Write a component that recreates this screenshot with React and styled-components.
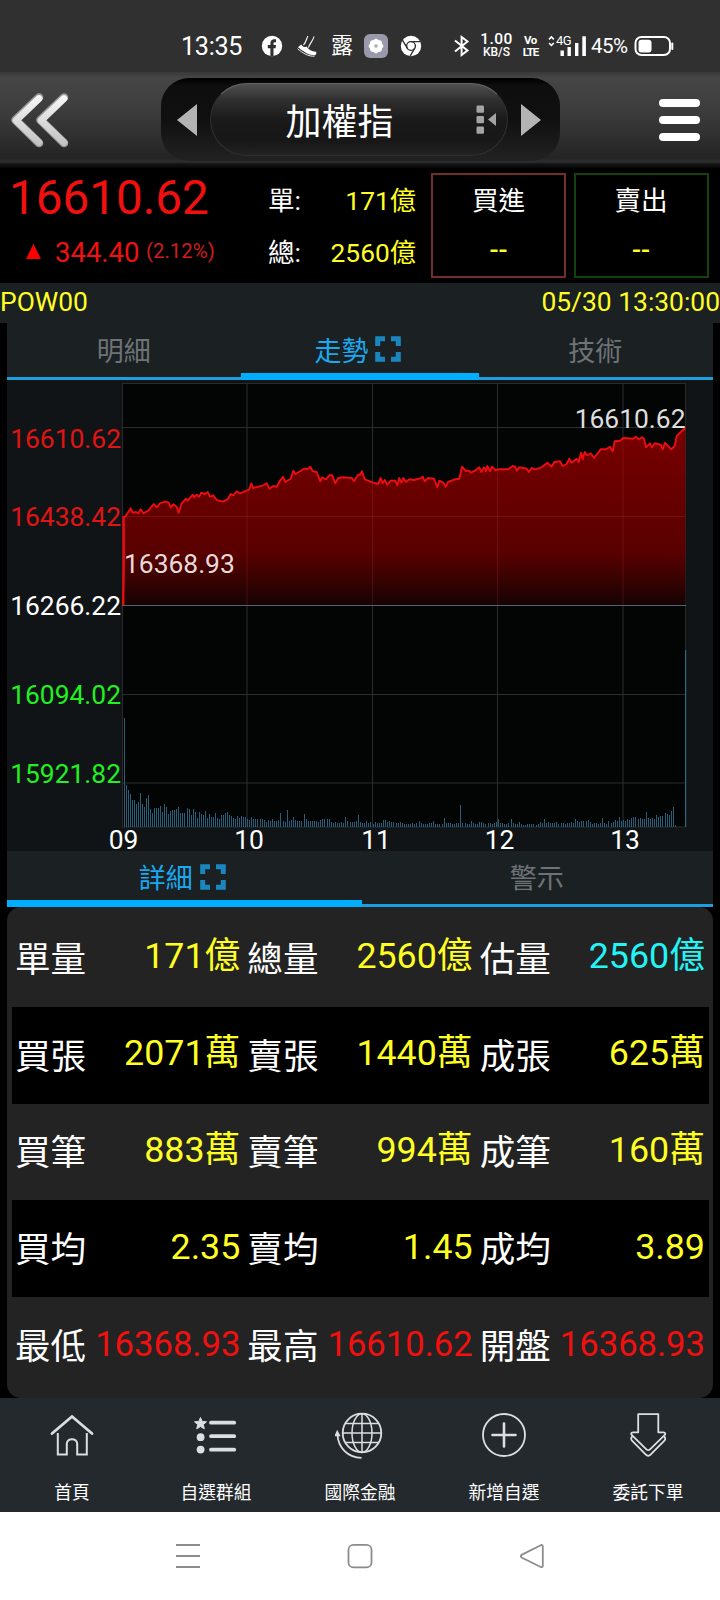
import React from "react";
import styled, { createGlobalStyle } from "styled-components";

const Colors = {
  Red: "#f01010",
  Yellow: "#ffff22",
  Green: "#22f022",
  Cyan: "#22f4f8",
  Blue: "#00aeff",
  Line: "#1c9fdc",
  Muted: "#6e7476",
  Bar: "#1b2023",
  Panel: "#232323",
};

const columns = [
  [
    { label: "單量", value: "171億" },
    { label: "總量", value: "2560億" },
    { label: "估量", value: "2560億", color: Colors.Cyan },
  ],
  [
    { label: "買張", value: "2071萬" },
    { label: "賣張", value: "1440萬" },
    { label: "成張", value: "625萬" },
  ],
  [
    { label: "買筆", value: "883萬" },
    { label: "賣筆", value: "994萬" },
    { label: "成筆", value: "160萬" },
  ],
  [
    { label: "買均", value: "2.35" },
    { label: "賣均", value: "1.45" },
    { label: "成均", value: "3.89" },
  ],
  [
    { label: "最低", value: "16368.93", color: Colors.Red },
    { label: "最高", value: "16610.62", color: Colors.Red },
    { label: "開盤", value: "16368.93", color: Colors.Red },
  ],
];

// chart data, x and y in thirds of a pixel
const trendMorning = [
  [369, 705], [372, 560], [371, 445], [377, 438], [392, 415], [398, 428],
  [408, 426], [415, 430], [422, 418], [430, 430], [445, 422], [461, 402],
  [470, 412], [480, 400], [495, 395], [506, 398], [512, 412], [520, 403],
  [530, 410], [536, 428], [545, 400], [558, 386], [563, 392], [578, 374],
  [583, 382], [590, 374], [597, 380], [604, 368], [614, 372], [623, 366],
  [630, 380], [640, 376], [650, 390], [668, 395], [683, 388], [692, 372],
  [700, 376], [710, 364], [720, 370], [740, 362], [748, 358], [754, 340],
  [760, 354], [775, 350], [790, 346], [800, 340], [808, 356], [820, 348],
  [830, 350], [840, 332], [849, 320], [856, 336], [872, 326], [880, 302],
  [886, 312], [900, 304], [912, 296], [925, 296], [931, 290], [938, 304],
  [950, 306], [961, 334], [966, 322], [978, 328], [988, 316], [997, 316],
  [1006, 340], [1015, 324], [1030, 322], [1056, 324], [1062, 334],
  [1074, 314],
];

const trendNoon = [
  [0, 314], [6, 304], [14, 328], [40, 338], [54, 342], [62, 324], [68, 340],
  [74, 330], [82, 344], [92, 332], [106, 332], [112, 346], [118, 324],
  [124, 338], [130, 324], [138, 336], [148, 328], [162, 330], [178, 326],
  [188, 320], [194, 334], [204, 324], [222, 326], [232, 352], [238, 332],
  [250, 338], [257, 350], [264, 336], [285, 328], [298, 326], [306, 290],
  [316, 302], [328, 302], [332, 308], [345, 302], [358, 292], [364, 306],
  [372, 292], [378, 304], [382, 288], [390, 304], [396, 290], [406, 300],
  [420, 298], [445, 298], [458, 288], [466, 290], [470, 302], [478, 292],
  [500, 296], [507, 306], [515, 294], [525, 298], [545, 292], [562, 278],
  [575, 290], [583, 276], [600, 274], [608, 288], [620, 282], [628, 266],
  [634, 278], [650, 266], [656, 276], [663, 248], [668, 268], [674, 246],
  [682, 256], [692, 250], [702, 264], [722, 238], [738, 238], [750, 230],
  [758, 244], [764, 214], [780, 212], [790, 204], [820, 206], [828, 200],
  [836, 208], [846, 202], [852, 206], [858, 232], [870, 220], [876, 232],
  [884, 220], [902, 224], [908, 238], [915, 218], [934, 238], [944, 228],
  [950, 198], [976, 173],
];

const volumes = [
  {
    from: 117,
    to: 240,
    bars: [
      109, 42, 37, 33, 27, 27, 23, 25, 34, 23, 20, 29, 32, 18, 14, 19, 19, 19,
      21, 15, 23, 20, 13, 16, 17, 17, 18, 20, 14, 14, 14, 19, 18, 12, 18, 15,
      9, 15, 13, 12, 16, 9, 13, 10, 10, 14, 9, 8, 12, 12, 14, 15, 12, 11, 9, 8,
      11, 9, 11, 10, 10,
    ],
  },
  {
    from: 240,
    to: 353,
    bars: [
      8, 7, 10, 8, 8, 8, 8, 8, 7, 5, 7, 6, 8, 6, 6, 7, 14, 6, 5, 17, 6, 7, 10,
      7, 6, 6, 6, 13, 8, 6, 6, 6, 6, 6, 5, 7, 8, 8, 8, 8, 5, 4, 5, 4, 4, 5, 4,
      10, 6, 5, 5, 5, 6, 12,
    ],
  },
  {
    from: 353,
    to: 491,
    bars: [
      5, 4, 4, 6, 4, 5, 3, 5, 4, 4, 4, 7, 7, 5, 6, 5, 5, 4, 4, 5, 4, 3, 3, 3,
      3, 4, 3, 4, 6, 4, 3, 3, 3, 4, 4, 6, 3, 3, 3, 3, 9, 4, 4, 4, 3, 3, 4, 4,
      22, 4, 4, 3, 3, 6, 4, 3, 3, 5, 5, 4, 3, 4, 4, 3, 4, 5,
    ],
  },
  {
    from: 491,
    to: 616,
    bars: [
      8, 4, 4, 3, 3, 4, 8, 4, 3, 3, 5, 3, 2, 2, 3, 3, 3, 3, 2, 3, 5, 4, 8, 4,
      5, 4, 4, 4, 5, 3, 4, 4, 3, 4, 4, 5, 4, 8, 6, 5, 6, 6, 6, 7, 5, 3, 4, 4,
      3, 4, 9, 4, 3, 6, 4, 5, 7, 6, 10, 6,
    ],
  },
  {
    from: 616,
    to: 670,
    bars: [
      7, 6, 8, 7, 9, 10, 10, 8, 9, 8, 8, 15, 9, 8, 9, 8, 12, 10, 11, 11, 14,
      13, 12, 16, 20, 2,
    ],
  },
];

const axis = [
  { text: "16610.62", y: 67.5, color: "#e01414" },
  { text: "16438.42", y: 146, color: "#e01414" },
  { text: "16266.22", y: 235, color: "#fff" },
  { text: "16094.02", y: 323.5, color: Colors.Green },
  { text: "15921.82", y: 402.7, color: Colors.Green },
];

const hours = [
  { text: "09", x: 116.5 },
  { text: "10", x: 242 },
  { text: "11", x: 369 },
  { text: "12", x: 492.5 },
  { text: "13", x: 618 },
];

const TrendChart = () => {
  // the svg starts at (7, 380) of the page
  const points = [
    ...trendMorning.map(([x, y]) => [x / 3 - 7, y / 3 - 10]),
    ...trendNoon.map(([x, y]) => [x / 3 + 353, y / 3 - 10]),
  ]
    .map(([x, y]) => `${x.toFixed(1)},${y.toFixed(1)}`)
    .join(" ");

  return (
    <Chart.Svg width="706" height="471" viewBox="0 0 706 471">
      <defs>
        <linearGradient id="fall" x1="0" y1="47" x2="0" y2="225" gradientUnits="userSpaceOnUse">
          <stop offset="0" stopColor="#780000" />
          <stop offset="0.7" stopColor="#5a0000" />
          <stop offset="0.85" stopColor="#3a0202" />
          <stop offset="1" stopColor="#160304" />
        </linearGradient>
      </defs>
      <rect x="115.5" y="3.5" width="563" height="443.5" fill="#030504" stroke="#272b2c" />
      <g stroke="#2a2d2e">
        <path d="M115 47.5H679M115 136.5H679M115 314.5H679M115 403H679" />
        <path d="M240 3V447M365.5 3V447M490.5 3V447M616 3V447" />
      </g>
      <polygon points={`${points} 678.5,225 116,225`} fill="url(#fall)" />
      <g stroke="#ff6060" strokeOpacity="0.14">
        <path d="M115 136.5H679M240 112V225M365.5 103V225M490.5 90V225M616 60V225" />
      </g>
      <polyline points={points} fill="none" stroke="#ee0c10" strokeWidth="1.9" strokeLinejoin="round" />
      <path d="M116.4 136V225" stroke="#e80c10" strokeWidth="2" />
      <path d="M115 225.5H679" stroke="#55636f" />
      {volumes.map(({ from, to, bars }) =>
        bars.map((h, i) => (
          <rect
            key={`${from}-${i}`}
            x={Math.round(from + ((to - from) / bars.length) * i)}
            y={447 - h}
            width="1"
            height={h}
            fill="#2a5f7c"
          />
        ))
      )}
      <rect x="678" y="270" width="1.2" height="177" fill="#2d6483" />
      {axis.map((item) => (
        <Chart.Text key={item.text} x="114" y={item.y} fill={item.color} textAnchor="end">
          {item.text}
        </Chart.Text>
      ))}
      <Chart.Text x="117" y="192.5" fill="#e8dada">
        16368.93
      </Chart.Text>
      <Chart.Text x="678.5" y="48" fill="#dedede" textAnchor="end">
        16610.62
      </Chart.Text>
      {hours.map((item) => (
        <Chart.Text key={item.text} x={item.x} y="469" fill="#fff" textAnchor="middle">
          {item.text}
        </Chart.Text>
      ))}
    </Chart.Svg>
  );
};

const ExpandIcon = () => (
  <svg width="26" height="26" viewBox="0 0 26 26" fill="none" stroke="#1a86bf" strokeWidth="5">
    <path d="M10 2.7H2.7V10M16 2.7H23.3V10M10 23.3H2.7V16M16 23.3H23.3V16" />
  </svg>
);

const StatusBar = () => (
  <Status.Wrap>
    <Status.Time>13:35</Status.Time>
    <Status.Item $left={19} $width={22}>
      <svg width="22" height="22" viewBox="0 0 22 22">
        <circle cx="11" cy="11" r="10.2" fill="#fff" />
        <path d="M9.4 21V13.2H6.8V10H9.4V8.2C9.4 5.5 11 4.3 13.2 4.3H15V7.2H13.9C12.8 7.2 12.5 7.7 12.5 8.6V10H15L14.6 13.2H12.5V21Z" fill="#303030" />
      </svg>
    </Status.Item>
    <Status.Item $left={14} $width={21}>
      <svg width="21" height="22" viewBox="0 0 21 22">
        <path d="M1 12.2L4.2 9.4C5.5 11.6 7 12.6 9.4 11.4C11.2 14 14 16.2 19 16.8C19.8 18.6 19 19.8 17.8 20.2C12 20.4 7 16.8 1 12.2Z" fill="#fff" />
        <path d="M0.6 13.8C6 18.3 11.5 21.6 17.5 21.2" fill="none" stroke="#fff" strokeWidth="0.9" />
        <path d="M10.8 1C9.5 4 8.8 7.8 6.5 10M17 1.5C16 6 13 8 11.4 12.6" fill="none" stroke="#fff" strokeWidth="1.1" />
      </svg>
    </Status.Item>
    <Status.Item $left={13} $width={22}>
      <Status.Lu>露</Status.Lu>
    </Status.Item>
    <Status.Item $left={11} $width={24}>
      <svg width="24" height="24" viewBox="0 0 24 24">
        <rect width="24" height="24" rx="6" fill="#9a99ab" />
        <g fill="#fff">
          <rect x="6.2" y="6.2" width="11.6" height="11.6" rx="2" />
          <rect x="6.2" y="6.2" width="11.6" height="11.6" rx="2" transform="rotate(45 12 12)" />
        </g>
        <circle cx="12" cy="12" r="1.8" fill="#aaa9b5" />
      </svg>
    </Status.Item>
    <Status.Item $left={12} $width={22}>
      <svg width="22" height="22" viewBox="0 0 22 22">
        <circle cx="11" cy="11" r="10.2" fill="#fff" />
        <circle cx="11" cy="11" r="4.4" fill="none" stroke="#303030" strokeWidth="1.4" />
        <path d="M11 6.6H20.4M7.3 13.2L2.4 5.2M14.7 13.2L10.2 21" stroke="#303030" strokeWidth="1.4" />
      </svg>
    </Status.Item>
    <Status.Item $left={31} $width={17}>
      <svg width="17" height="22" viewBox="0 0 17 22" fill="none" stroke="#fff" strokeWidth="2">
        <path d="M2 5.5L14.5 15.5L8.6 20V2L14.5 6.5L2 16.5" />
      </svg>
    </Status.Item>
    <Status.Stack $left={10} $width={33}>
      <Status.Speed>1.00</Status.Speed>
      <Status.Unit>KB/S</Status.Unit>
    </Status.Stack>
    <Status.Stack $left={9} $width={17}>
      <Status.Volte>Vo</Status.Volte>
      <Status.Volte>LTE</Status.Volte>
    </Status.Stack>
    <Status.Signal>
      <svg width="39" height="22" viewBox="0 0 39 22" fill="#fff">
        <path d="M1 4.4L3.4 2L5.8 4.4M1 8L3.4 10.4L5.8 8" fill="none" stroke="#fff" strokeWidth="1.6" />
        <rect x="12.5" y="15.5" width="3.4" height="5.5" />
        <rect x="19.5" y="12" width="3.4" height="9" />
        <rect x="27" y="8" width="3.4" height="13" />
        <rect x="34.3" y="1.3" width="3.6" height="19.7" />
      </svg>
      <Status.Net>4G</Status.Net>
    </Status.Signal>
    <Status.Percent>45%</Status.Percent>
    <Status.Item $left={5} $width={40}>
      <svg width="40" height="22" viewBox="0 0 40 22">
        <rect x="1.5" y="2" width="34.5" height="18" rx="6" fill="none" stroke="#fff" strokeWidth="2" />
        <rect x="4.5" y="4.7" width="13" height="12.8" rx="3" fill="#fff" />
        <rect x="37.3" y="7.5" width="2" height="7.5" rx="1" fill="#fff" />
      </svg>
    </Status.Item>
  </Status.Wrap>
);

const menus = [
  {
    text: "首頁",
    icon: (
      <g strokeWidth="2.4">
        <path d="M5 23.5L25 6.5L45 23.5" strokeWidth="2.8" strokeLinecap="round" />
        <path d="M10.8 23V44.5H19.8V34C19.8 27.5 30.2 27.5 30.2 34V44.5H39.8V23" strokeWidth="2" />
      </g>
    ),
  },
  {
    text: "自選群組",
    icon: (
      <g>
        <path d="M9.5 7.5L11.2 11.4L15.5 11.8L12.3 14.6L13.3 18.8L9.5 16.6L5.7 18.8L6.7 14.6L3.5 11.8L7.8 11.4Z" fill="#dcdfe1" />
        <circle cx="9.6" cy="27.2" r="3.9" fill="#dcdfe1" stroke="none" />
        <circle cx="9.6" cy="39.6" r="3.9" fill="#dcdfe1" stroke="none" />
        <path d="M20 12.7H43.2M20 26.2H43.2M20 39.7H43.2" strokeWidth="3.8" strokeLinecap="round" />
      </g>
    ),
  },
  {
    text: "國際金融",
    icon: (
      <g strokeWidth="1.5">
        <circle cx="27" cy="23" r="19.3" strokeWidth="1.8" />
        <ellipse cx="27" cy="23" rx="10" ry="19.3" />
        <path d="M27 3.7V42.3M7.7 23H46.3M11 13.5H43M11 32.5H43" />
        <path d="M2.4 24C3 38 13 47.5 26.5 47.8" strokeWidth="1.8" />
        <path d="M2.2 21.5L0.5 25.5H4.4Z" fill="#dcdfe1" />
      </g>
    ),
  },
  {
    text: "新增自選",
    icon: (
      <g>
        <circle cx="25" cy="25" r="21" strokeWidth="1.8" />
        <path d="M13.5 25H36.5M25 13.5V36.5" strokeWidth="2.6" strokeLinecap="round" />
      </g>
    ),
  },
  {
    text: "委託下單",
    icon: (
      <g strokeWidth="1.8" strokeLinejoin="round">
        <path d="M15.2 4.2H35.3V22.3H40.5C42.5 22.3 42.8 24 41.6 25.2L27 39.3C25.8 40.5 24.6 40.5 23.4 39.3L8.9 25.2C7.7 24 8 22.3 10 22.3H15.2Z" />
        <path d="M9.6 26.3C7.8 27.5 7.8 29.4 9 30.6L22.6 44.4C24.3 46.3 26.1 46.3 27.8 44.4L41.4 30.6C42.6 29.4 42.6 27.5 40.9 26.3" />
      </g>
    ),
  },
];

const App = () => {
  return (
    <>
      <GlobalStyle />
      <Page>
        <StatusBar />

        <Header.Wrap>
          <svg width="62" height="60" viewBox="0 0 62 60" fill="none">
            <defs>
              <linearGradient id="metal" x1="0" y1="0" x2="0" y2="60" gradientUnits="userSpaceOnUse">
                <stop offset="0.1" stopColor="#f8f8f8" />
                <stop offset="1" stopColor="#bcbcbc" />
              </linearGradient>
            </defs>
            <path d="M31 7.5L7.5 30L31 53M56 7.5L32.5 30L56 53" stroke="#989898" strokeWidth="8.6" strokeLinecap="round" strokeLinejoin="round" />
            <path d="M31 8.5L8 30.5L31 52.5M56 8.5L33 30.5L56 52.5" stroke="url(#metal)" strokeWidth="6.8" strokeLinecap="round" strokeLinejoin="round" />
          </svg>
          <Header.Switcher>
            <svg width="20" height="32" viewBox="0 0 20 32">
              <path d="M20 0V32L0 16Z" fill="#b4b4b4" />
            </svg>
            <Header.Name>
              <span>加權指</span>
              <svg width="21" height="30" viewBox="0 0 21 30" fill="#a4a4a4">
                <rect x="0.5" y="0.5" width="7.5" height="7.2" rx="1.2" />
                <rect x="0.5" y="11" width="7.5" height="7.2" rx="1.2" />
                <rect x="0.5" y="21.5" width="7.5" height="7.2" rx="1.2" />
                <path d="M20 8V21L12 14.5Z" />
              </svg>
            </Header.Name>
            <svg width="20" height="32" viewBox="0 0 20 32">
              <path d="M0 0V32L20 16Z" fill="#b4b4b4" />
            </svg>
          </Header.Switcher>
          <Header.Menu>
            <i />
            <i />
            <i />
          </Header.Menu>
        </Header.Wrap>

        <Quote.Wrap>
          <Quote.Price>
            <div className="price">16610.62</div>
            <div className="change">
              <svg width="15" height="15" viewBox="0 0 15 15">
                <path d="M7.5 0L15 15H0Z" fill="#ff0000" />
              </svg>
              <span>344.40</span>
              <small>(2.12%)</small>
            </div>
          </Quote.Price>
          <Quote.Amount>
            <dt>單:</dt>
            <dd>171億</dd>
            <dt>總:</dt>
            <dd>2560億</dd>
          </Quote.Amount>
          <Quote.Trade $line="#752c2c">
            <span>買進</span>
            <em>--</em>
          </Quote.Trade>
          <Quote.Trade $line="#17400f">
            <span>賣出</span>
            <em>--</em>
          </Quote.Trade>
        </Quote.Wrap>

        <InfoBar>
          <span>POW00</span>
          <span>05/30 13:30:00</span>
        </InfoBar>

        <Content>
          <Tabs $height={57}>
            <Tab>明細</Tab>
            <Tab $active>
              走勢
              <ExpandIcon />
            </Tab>
            <Tab>技術</Tab>
          </Tabs>
          <TrendChart />
          <Tabs $height={56}>
            <Tab $active>
              詳細
              <ExpandIcon />
            </Tab>
            <Tab>警示</Tab>
          </Tabs>
          <Detail.Panel>
            {columns.map((row, i) => (
              <Detail.Row key={row[0].label} $dark={i % 2 === 1}>
                {row.map((cell) => (
                  <Detail.Cell key={cell.label} $color={cell.color} $small={cell.value.length > 7}>
                    <div className="th">{cell.label}</div>
                    <div className="td">{cell.value}</div>
                  </Detail.Cell>
                ))}
              </Detail.Row>
            ))}
          </Detail.Panel>
        </Content>

        <BottomMenu>
          {menus.map((menu) => (
            <li key={menu.text}>
              <svg width="50" height="50" viewBox="0 0 50 50" fill="none" stroke="#dcdfe1">
                {menu.icon}
              </svg>
              <span>{menu.text}</span>
            </li>
          ))}
        </BottomMenu>

        <SystemNav>
          <svg width="26" height="26" viewBox="0 0 26 26">
            <path d="M1 2H25M1 13H25M1 24H25" />
          </svg>
          <svg width="26" height="26" viewBox="0 0 26 26">
            <rect x="1.5" y="1.8" width="23" height="22.6" rx="5" />
          </svg>
          <svg width="26" height="26" viewBox="0 0 26 26">
            <path d="M21.8 2.2L3 11.6C1.4 12.5 1.4 13.9 3 14.7L21.8 24C23 24.5 23.8 24 23.8 22.8V3.4C23.8 2.2 23 1.7 21.8 2.2Z" />
          </svg>
        </SystemNav>
      </Page>
    </>
  );
};

// styled
const GlobalStyle = createGlobalStyle`
  * {
    box-sizing: border-box;
  }
  body {
    margin: 0;
    background-color: #000;
  }
  svg {
    display: block;
    flex-shrink: 0;
  }
`;

const Page = styled.div`
  width: 720px;
  height: 1600px;
  display: flex;
  flex-direction: column;
  overflow: hidden;
  background-color: #000;
  color: #fff;
  font-family: Roboto, "Noto Sans CJK TC", sans-serif;
  font-size: 26.6px;
  white-space: nowrap;
`;

const Status = {
  Wrap: styled.div`
    height: 72px;
    flex-shrink: 0;
    display: flex;
    align-items: center;
    padding: 20px 0 0 181px;
    background-color: #303030;
    line-height: 1;
  `,
  Time: styled.div`
    width: 61px;
    padding-top: 1px;
    font-size: 25.2px;
    letter-spacing: -0.3px;
  `,
  Item: styled.div`
    width: ${(props) => props.$width}px;
    margin-left: ${(props) => props.$left}px;
  `,
  Lu: styled.div`
    font-size: 22px;
    line-height: 22px;
  `,
  Stack: styled.div`
    width: ${(props) => props.$width}px;
    margin-left: ${(props) => props.$left}px;
    display: flex;
    flex-direction: column;
    align-items: center;
  `,
  Speed: styled.div`
    font-size: 15.5px;
    line-height: 13px;
    font-weight: 500;
    letter-spacing: 0.5px;
  `,
  Unit: styled.div`
    font-size: 12px;
    line-height: 13px;
    font-weight: 500;
  `,
  Volte: styled.div`
    font-size: 11.5px;
    line-height: 12px;
    font-weight: 700;
    letter-spacing: -0.4px;
    & + & {
      letter-spacing: -1px;
    }
  `,
  Signal: styled.div`
    position: relative;
    margin-left: 9px;
  `,
  Net: styled.div`
    position: absolute;
    left: 8px;
    top: -1px;
    font-size: 13px;
    line-height: 14px;
    letter-spacing: -0.5px;
  `,
  Percent: styled.div`
    width: 38px;
    margin-left: 4px;
    font-size: 20.5px;
    letter-spacing: -0.5px;
  `,
};

const Header = {
  Wrap: styled.div`
    height: 96px;
    flex-shrink: 0;
    display: flex;
    align-items: center;
    justify-content: space-between;
    padding: 0 20px 0 8px;
    background: linear-gradient(
      #383838 0,
      #464646 6px,
      #3c3c3c 40px,
      #242424 86px,
      #2e2e2e 90px,
      #141414 92px,
      #060606 96px
    );
  `,
  Switcher: styled.div`
    width: 399px;
    height: 83px;
    display: flex;
    align-items: center;
    justify-content: space-between;
    padding: 0 19px 0 16px;
    margin: -1px 9px 0 0;
    border-radius: 28px;
    background: linear-gradient(#000 0, #0e0e0e 8px, #101010 50%, #222 100%);
  `,
  Name: styled.div`
    width: 298px;
    height: 73px;
    display: flex;
    align-items: center;
    justify-content: flex-end;
    gap: 82px;
    padding-right: 10px;
    border: 1px solid #303030;
    border-top-color: #666;
    border-radius: 37px;
    background: linear-gradient(#505050 0, #303030 22%, #1a1a1a 50%, #171717 80%, #222 100%);
    font-size: 36px;
    line-height: 40px;
    span {
      padding-top: 6px;
    }
  `,
  Menu: styled.div`
    display: flex;
    flex-direction: column;
    gap: 9px;
    i {
      width: 41px;
      height: 8px;
      border-radius: 4px;
      background-color: #fff;
    }
  `,
};

const Quote = {
  Wrap: styled.div`
    height: 115px;
    flex-shrink: 0;
    display: flex;
    align-items: flex-start;
    padding: 5px 11px 0 9px;
  `,
  Price: styled.div`
    width: 259px;
    color: ${Colors.Red};
    .price {
      font-size: 47.6px;
      line-height: 50px;
    }
    .change {
      display: flex;
      align-items: center;
      height: 30px;
      margin-top: 14px;
      padding-left: 17px;
      svg {
        margin-top: -1px;
      }
      span {
        width: 91px;
        margin-left: 14px;
        font-size: 27.5px;
      }
      small {
        margin-top: -3px;
        font-size: 20.4px;
        color: #d01c1c;
      }
    }
  `,
  Amount: styled.dl`
    width: 148px;
    display: grid;
    grid-template-columns: 40px auto;
    grid-auto-rows: 52px;
    margin: 2px 15px 0 0;
    line-height: 52px;
    dd {
      margin: 0;
      text-align: right;
      font-size: 26.3px;
      color: ${Colors.Yellow};
    }
  `,
  Trade: styled.div`
    width: 135px;
    height: 105px;
    display: flex;
    flex-direction: column;
    align-items: center;
    padding-top: 1px;
    border: 2px solid ${(props) => props.$line};
    line-height: 49px;
    & + & {
      margin-left: 7.5px;
    }
    em {
      font-style: normal;
      font-weight: 500;
      color: ${Colors.Yellow};
    }
  `,
};

const InfoBar = styled.div`
  height: 40px;
  flex-shrink: 0;
  display: flex;
  justify-content: space-between;
  background-color: ${Colors.Bar};
  color: ${Colors.Yellow};
  font-size: 26.4px;
  line-height: 39px;
`;

const Content = styled.div`
  width: 706px;
  flex-shrink: 0;
  margin-left: 7px;
`;

const Tabs = styled.div`
  height: ${(props) => props.$height}px;
  display: flex;
  background: linear-gradient(${Colors.Line}, ${Colors.Line}) bottom / 100% 3px no-repeat ${Colors.Bar};
`;

const Tab = styled.div`
  flex: 1;
  display: flex;
  align-items: center;
  justify-content: center;
  gap: 7px;
  padding: ${(props) => (props.$active ? "2px 4px 0 0" : "0 1px 5px 0")};
  border-bottom: ${(props) => (props.$active ? `7px solid ${Colors.Blue}` : "none")};
  color: ${(props) => (props.$active ? "#1aa8ee" : Colors.Muted)};
  font-size: 27px;
`;

const Chart = {
  Svg: styled.svg`
    overflow: visible;
    background-color: #111416;
  `,
  Text: styled.text`
    font-size: 26.4px;
  `,
};

const Detail = {
  Panel: styled.div`
    height: 491px;
    padding: 3px 4px 4px 5px;
    border-radius: 14px;
    background-color: ${Colors.Panel};
  `,
  Row: styled.div`
    height: 96.8px;
    display: grid;
    grid-template-columns: repeat(3, 1fr);
    background-color: ${(props) => (props.$dark ? "#000" : "transparent")};
  `,
  Cell: styled.div`
    display: flex;
    align-items: center;
    justify-content: space-between;
    padding: 0 4px 0 3px;
    font-size: 35.6px;
    line-height: 42px;
    .th {
      padding-top: 3px;
    }
    .td {
      margin-top: -4px;
      font-size: ${(props) => (props.$small ? "34.6px" : "35.8px")};
      color: ${(props) => props.$color || Colors.Yellow};
    }
  `,
};

const BottomMenu = styled.ul`
  height: 114px;
  flex-shrink: 0;
  display: grid;
  grid-template-columns: repeat(5, 1fr);
  margin: 0;
  padding: 12px 0 0;
  list-style: none;
  background-color: #24292d;
  li {
    display: flex;
    flex-direction: column;
    align-items: center;
    gap: 22px;
  }
  span {
    font-size: 17.7px;
    line-height: 22px;
  }
`;

const SystemNav = styled.div`
  height: 88px;
  flex-shrink: 0;
  display: flex;
  align-items: center;
  justify-content: center;
  gap: 146px;
  background-color: #fff;
  svg {
    fill: none;
    stroke: #8c8c8c;
    stroke-width: 1.8;
  }
`;

export default App;
